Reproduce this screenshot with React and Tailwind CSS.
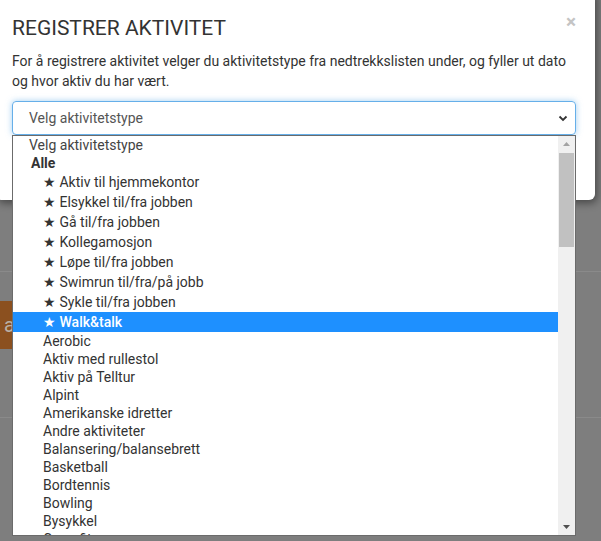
import React from 'react';

const starred = [
  'Aktiv til hjemmekontor',
  'Elsykkel til/fra jobben',
  'Gå til/fra jobben',
  'Kollegamosjon',
  'Løpe til/fra jobben',
  'Swimrun til/fra/på jobb',
  'Sykle til/fra jobben',
  'Walk&talk',
];

const others = [
  'Aerobic',
  'Aktiv med rullestol',
  'Aktiv på Telltur',
  'Alpint',
  'Amerikanske idretter',
  'Andre aktiviteter',
  'Balansering/balansebrett',
  'Basketball',
  'Bordtennis',
  'Bowling',
  'Bysykkel',
  'Crossfit',
];

export default function App() {
  return (
    <div
      className="relative w-[601px] h-[541px] overflow-hidden bg-[#7e7e7e]"
      style={{ fontFamily: 'Roboto, "Liberation Sans", sans-serif' }}
    >
      {/* dimmed page behind the modal */}
      <div className="flex flex-col">
        <div className="h-[271px]" />
        <div className="border-t border-[#8a8a8a] h-[146px] pt-[29px]">
          <div className="w-[12px] h-[48px] bg-[#8b501f] text-[#b9b0a6] text-[20px] leading-[48px] pl-[4px] overflow-hidden">
            a
          </div>
        </div>
        <div className="border-t border-[#8a8a8a]" />
      </div>

      {/* modal */}
      <div className="absolute left-[-4px] top-[-10px] w-[599px] h-[210px] bg-white rounded-md shadow-[2px_3px_8px_rgba(0,0,0,0.45)] pl-[16px] pt-[23px]">
        <button className="absolute right-[19px] top-[22px] text-[#c4c4c4] text-[19px] font-bold leading-none">
          ×
        </button>
        <h1 className="text-[21px] leading-[30px] text-[#333]">REGISTRER AKTIVITET</h1>
        <p className="mt-[8px] text-[14px] leading-[20px] text-[#333] w-[565px]">
          For å registrere aktivitet velger du aktivitetstype fra nedtrekkslisten under, og fyller ut dato og hvor aktiv du har vært.
        </p>
        <div className="mt-[10px] w-[564px] h-[34px] rounded-[4px] border border-[#66afe9] shadow-[0_0_6px_rgba(102,175,233,0.6)] flex items-center justify-between pl-[16px] pr-[6px] text-[14px] text-[#555]">
          <span>Velg aktivitetstype</span>
          <svg width="12" height="12" viewBox="0 0 12 12" fill="none">
            <path d="M2.5 4.5 L6 8 L9.5 4.5" stroke="#333" strokeWidth="1.8" />
          </svg>
        </div>
      </div>

      {/* opened native dropdown list */}
      <div className="absolute left-[12px] top-[135px] w-[564px] h-[401px] bg-white border border-[#6b6b6b] flex overflow-hidden text-[14px] text-[#333]">
        <div className="flex-1 flex flex-col">
          <div className="h-[18px] leading-[18px] pl-[16px] text-[#444]">Velg aktivitetstype</div>
          <div className="h-[18px] leading-[18px] pl-[18px] font-bold">Alle</div>
          {starred.map((name) => (
            <div
              key={name}
              className={`h-[20px] leading-[20px] pl-[30px] ${
                name === 'Walk&talk' ? 'bg-[#1e90ff] text-white font-medium' : ''
              }`}
            >
              ★ {name}
            </div>
          ))}
          {others.map((name) => (
            <div key={name} className="h-[18px] leading-[18px] pl-[30px]">
              {name}
            </div>
          ))}
        </div>
        <div className="w-[17px] bg-[#f0f0f0] flex flex-col items-center">
          <svg width="17" height="17" viewBox="0 0 17 17" className="shrink-0">
            <path d="M5 10 L8.5 6 L12 10 Z" fill="#a3a3a3" />
          </svg>
          <div className="w-[15px] h-[94px] bg-[#c1c1c1]" />
          <div className="flex-1" />
          <svg width="17" height="17" viewBox="0 0 17 17" className="shrink-0">
            <path d="M5 7 L8.5 11 L12 7 Z" fill="#505050" />
          </svg>
        </div>
      </div>
    </div>
  );
}
